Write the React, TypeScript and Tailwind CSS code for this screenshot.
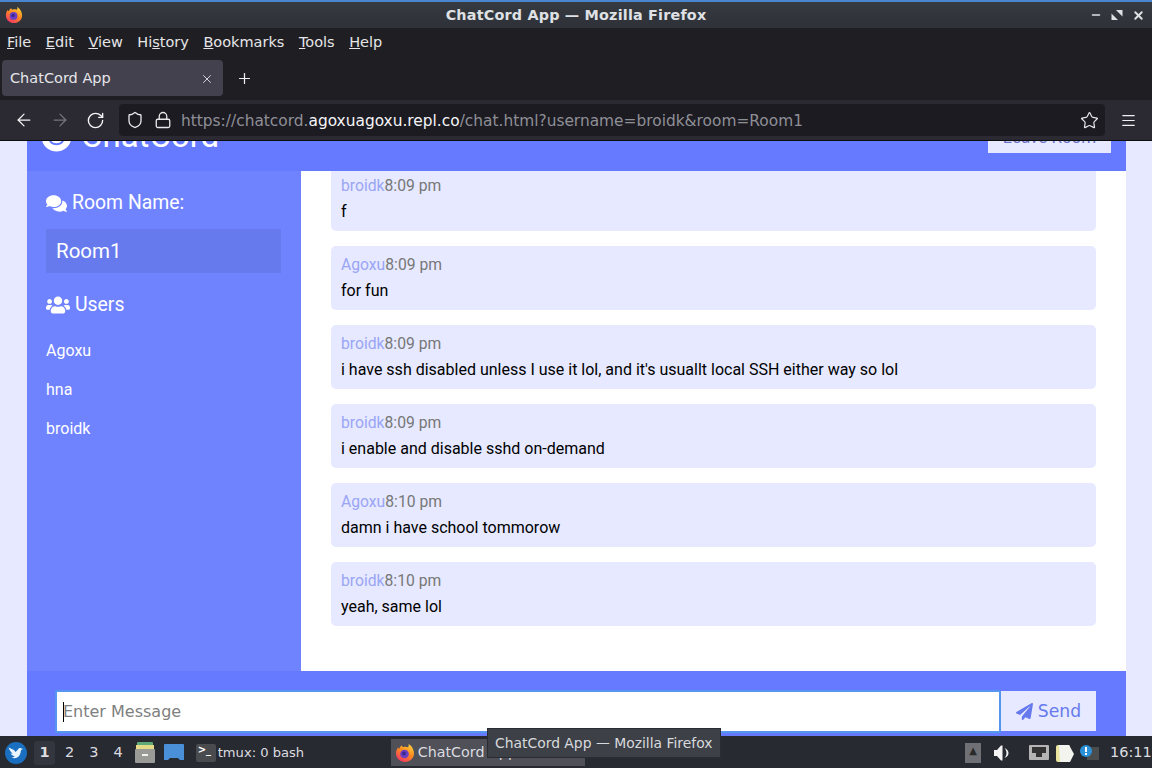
import { ArrowLeft, ArrowRight, RotateCw, Shield, Lock, Star, Menu, X, Plus, Minus } from 'lucide-react';
import { FaComments, FaUsers, FaPaperPlane, FaSmile } from 'react-icons/fa';

const menus = [
  ['F', 'ile'],
  ['E', 'dit'],
  ['V', 'iew'],
  ['Hi', 's', 'tory'],
  ['B', 'ookmarks'],
  ['T', 'ools'],
  ['H', 'elp'],
];

const messages = [
  { user: 'broidk', time: '8:09 pm', text: 'f' },
  { user: 'Agoxu', time: '8:09 pm', text: 'for fun' },
  { user: 'broidk', time: '8:09 pm', text: "i have ssh disabled unless I use it lol, and it's usuallt local SSH either way so lol" },
  { user: 'broidk', time: '8:09 pm', text: 'i enable and disable sshd on-demand' },
  { user: 'Agoxu', time: '8:10 pm', text: 'damn i have school tommorow' },
  { user: 'broidk', time: '8:10 pm', text: 'yeah, same lol' },
];

function FirefoxLogo({ size }: { size: number }) {
  return (
    <svg width={size} height={size} viewBox="0 0 20 20">
      <defs>
        <linearGradient id="ff" x1="0.8" y1="0" x2="0.2" y2="1">
          <stop offset="0" stopColor="#ffd43b" />
          <stop offset="0.45" stopColor="#ff8a1f" />
          <stop offset="1" stopColor="#f0306a" />
        </linearGradient>
      </defs>
      <path d="M13.5 1c.6 1.600 0 2.600-.6 3.200C11.500 3.600 9.500 3.500 8 4.200 7.500 3.800 7 3.200 6.800 2.500 5 3.500 4.500 4.800 4.400 5.800 3.800 5.500 3.300 5 3 4.500 1.800 6 1 8 1 10.500 1 15.200 5 19 10 19s9-3.800 9-8.500C19 6.500 16.500 2.500 13.500 1z" fill="url(#ff)" />
      <circle cx="9.500" cy="11" r="4.300" fill="#6a3fc4" />
      <circle cx="9" cy="10.500" r="2" fill="#3a2a90" />
    </svg>
  );
}

function BrowserChrome() {
  return (
    <>
      <div className="h-[28px] shrink-0 border-t-2 border-[#4a86d0] bg-gradient-to-b from-[#363b41] to-[#2e3137] flex items-center px-[5px] text-[#dfe1e4]">
        <div className="w-[64px]">
          <FirefoxLogo size={18} />
        </div>
        <div className="flex-1 text-center pt-[1px] font-bold text-[14.350px] tracking-[0.2px]">ChatCord App — Mozilla Firefox</div>
        <div className="w-[64px] flex items-center justify-end gap-[9px] pr-[2px]">
          <Minus size={12} strokeWidth={3} />
          <svg width="12" height="12" viewBox="0 0 12 12" fill="#dfe1e4">
            <path d="M5 1h6.500v6.500zM7 11H.5V4.500z" />
          </svg>
          <X size={13} strokeWidth={3.500} />
        </div>
      </div>
      <div className="h-[32px] shrink-0 bg-[#1f1f23] flex items-center pb-[2px] pl-[7px] gap-[14.500px] text-[14.500px] text-[#e6e6e8]">
        {menus.map((m) => (
          <span key={m.join('')}>
            {m.length === 3 ? (
              <>
                {m[0]}
                <span className="underline">{m[1]}</span>
                {m[2]}
              </>
            ) : (
              <>
                <span className="underline">{m[0]}</span>
                {m[1]}
              </>
            )}
          </span>
        ))}
      </div>
      <div className="h-[40px] shrink-0 bg-[#1f1f23] flex items-start pl-[2px]">
        <div className="w-[221px] h-[36px] rounded-[4px] bg-[#42414d] flex items-center pl-[8px] pr-[9px] pt-[1px] text-[14.500px] text-[#e6e6ea]">
          <span className="flex-1">ChatCord App</span>
          <X size={14} strokeWidth={1.500} />
        </div>
        <div className="h-[36px] ml-[13px] flex items-center text-[#f0f0f2]">
          <Plus size={17} strokeWidth={1.750} />
        </div>
      </div>
      <div className="h-[41px] shrink-0 bg-[#2b2a33] border-b border-[#0c0c0d] flex items-center relative">
        <div className="w-[119px] flex items-center pl-[14px] gap-[16px] text-[#f5f5f7]">
          <ArrowLeft size={20} strokeWidth={1.500} />
          <ArrowRight size={20} strokeWidth={1.500} className="text-[#76757e]" />
          <RotateCw size={19} strokeWidth={1.750} />
        </div>
        <div className="w-[986px] h-[32px] bg-[#1c1b22] rounded-[4px] flex items-center pl-[7px] pr-[6px] text-[#e8e8ea]">
          <Shield size={18} strokeWidth={1.750} />
          <Lock size={18} strokeWidth={1.750} className="ml-[10px]" />
          <span className="ml-[9px] pt-[3px] flex-1 text-[15.400px] text-[#8f8f96] whitespace-nowrap">
            https://chatcord.<span className="text-[#f5f5f7]">agoxuagoxu.repl.co</span>/chat.html?username=broidk&amp;room=Room1
          </span>
          <Star size={19} strokeWidth={1.500} />
        </div>
        <div className="flex-1 flex justify-center text-[#f0f0f2]">
          <Menu size={17} strokeWidth={1.750} />
        </div>
      </div>
    </>
  );
}

function ChatPage() {
  return (
    <div className="flex-1 min-h-0 bg-[#e6e9ff] pl-[27px] pr-[26px] overflow-hidden font-['Roboto',sans-serif]">
      <div className="h-[30px] bg-[#667aff] flex justify-between items-end pl-[14px] pr-[15px] overflow-hidden">
        <div className="flex items-center gap-[9px] mb-[15px] text-white text-[33px] leading-[40px] shrink-0 h-[40px]">
          <FaSmile size={31} />
          <span>ChatCord</span>
        </div>
        <div className="mb-[18px] w-[123px] h-[40px] bg-[#e6e9ff] text-[#6a72c8] text-[17px] leading-[20px] flex items-end justify-center pb-[6px] shrink-0">
          Leave Room
        </div>
      </div>
      <div className="h-[500px] flex">
        <div className="w-[274px] bg-[#7083ff] text-white px-[19px] pt-[21px]">
          <h3 className="flex items-center gap-[5px] text-[19.400px] leading-[22px] h-[22px]">
            <FaComments size={21} />
            Room Name:
          </h3>
          <div className="mt-[15px] h-[44px] w-[235px] bg-[#667aed] flex items-center pl-[10px] text-[20.500px]">Room1</div>
          <h3 className="mt-[21px] flex items-center gap-[5px] text-[19.400px] leading-[22px] h-[22px]">
            <FaUsers size={24} />
            Users
          </h3>
          <ul className="mt-[23px] flex flex-col gap-[15px] text-[16px] leading-[24px]">
            <li>Agoxu</li>
            <li>hna</li>
            <li>broidk</li>
          </ul>
        </div>
        <div className="flex-1 bg-white px-[30px] overflow-hidden">
          <div className="-mt-[4px] flex flex-col gap-[15px]">
            {messages.map((m, i) => (
              <div key={i} className="h-[64px] shrink-0 rounded-[5px] bg-[#e6e9ff] px-[10px] pt-[8px]">
                <p className="text-[15.700px] leading-[21px] text-[#777777]">
                  <span className="text-[#9aa5f5]">{m.user}</span>
                  {m.time}
                </p>
                <p className="mt-[3px] text-[16px] leading-[26px] text-[#000000]">{m.text}</p>
              </div>
            ))}
          </div>
        </div>
      </div>
      <div className="h-[65px] bg-[#667aff] pl-[28px] pr-[30px] pt-[19px] flex items-start">
        <div className="flex-1 h-[43px] bg-white border-2 border-[#5596ee] rounded-[2px] flex items-center pl-[6px]">
          <span className="w-px h-[20px] bg-black shrink-0" />
          <input readOnly placeholder="Enter Message" className="flex-1 bg-transparent outline-none pt-[1px] -ml-[1px] text-[16px] placeholder:text-[#808080] font-['DejaVu_Sans',sans-serif]" />
        </div>
        <div className="w-[95px] h-[40px] bg-[#e6e9ff] text-[#667aed] flex items-center justify-center gap-[5px] pt-[1px] text-[17.200px] mt-[1px] font-['DejaVu_Sans',sans-serif]">
          <FaPaperPlane size={17} />
          Send
        </div>
      </div>
    </div>
  );
}

function Taskbar() {
  return (
    <div className="h-[32px] shrink-0 bg-[#282a31] flex items-center text-[#dcdde0] text-[14.500px] pl-[5px] pt-[1px]">
      <svg width="22" height="22" viewBox="0 0 22 22">
        <circle cx="11" cy="11" r="11" fill="#1a6fc0" />
        <path d="M3.500 5.500 9 8l1.500 2 2.500-2.500c.5-1.300 1.700-1.800 2.800-1.300l2.200.8-2 .9c-.3 3-1 6-3.800 7.600-1.500.9-3.500 1-5.700.3 1.300-.2 2.400-.8 3.200-1.500C7.500 13.500 6 12.500 5.500 11.500l2.300.3C6 10.500 4.300 8 3.500 5.500z" fill="#eaf5fd" />
      </svg>
      <div className="ml-[7px] w-[21px] h-[24px] rounded-[3px] bg-[#33363e] flex items-center justify-center font-bold">1</div>
      <span className="ml-[10px]">2</span>
      <span className="ml-[15px]">3</span>
      <span className="ml-[15px]">4</span>
      <svg width="20" height="21" viewBox="0 0 20 21" className="ml-[12px]">
        <rect x="2" y="0" width="16" height="4" rx="1" fill="#5fa878" />
        <rect x="1" y="3" width="18" height="4" fill="#e5da88" />
        <rect x="0" y="7" width="20" height="14" rx="1" fill="#9a9a96" />
        <rect x="7" y="12" width="6" height="2" fill="#f2f2f2" />
      </svg>
      <svg width="20" height="17" viewBox="0 0 20 17" className="ml-[9px]">
        <path d="M0 1a1 1 0 011-1h18a1 1 0 011 1v15h-4l-2-2H6l-2 2H0z" fill="#4a90d9" />
      </svg>
      <div className="ml-[12px] w-[20px] h-[18px] rounded-[2px] bg-[#4a4b4f] flex items-start pl-[2px] pt-[1px] text-[10px] leading-[10px] font-bold text-white">
        &gt;_
      </div>
      <span className="ml-[2px] w-[173px] text-[13.100px]">tmux: 0 bash</span>
      <div className="w-[194px] h-[27px] bg-[#4f5058] flex items-center pl-[4px] gap-[3px] whitespace-nowrap text-[14.300px]">
        <FirefoxLogo size={20} />
        ChatCord App
      </div>
      <div className="flex-1" />
      <div className="w-[16px] h-[20px] bg-[#6f7075] flex items-start justify-center text-[10px] text-[#2a2a2a] mr-[13px]">▲</div>
      <svg width="16" height="16" viewBox="0 0 16 16" className="mr-[19px]">
        <path d="M0 5h3l4-4.500h1.500v15H7L3 11H0z" fill="#f4f4f4" />
        <path d="M10.500 3c2.700 1 4 3 4 5s-1.300 4-4 5c1.400-1.500 2-3.200 2-5s-.6-3.500-2-5z" fill="#f4f4f4" />
      </svg>
      <svg width="20" height="16" viewBox="0 0 20 16" className="mr-[6px]">
        <rect width="20" height="15" rx="1" fill="#b4b4b4" />
        <rect x="3" y="2" width="14" height="6" fill="#333" />
        <rect x="7" y="8" width="6" height="4" fill="#333" />
      </svg>
      <svg width="20" height="20" viewBox="0 0 20 20" className="mr-[4px]">
        <rect x="1" y="2" width="14" height="17" rx="2" fill="#e8e4a0" />
        <path d="M4 2h10l5 9-4 8H5z" fill="#f4f4ef" />
      </svg>
      <svg width="20" height="18" viewBox="0 0 20 18" className="mr-[11px]">
        <rect x="8" y="3" width="12" height="13" fill="#4a4c4e" />
        <circle cx="7" cy="7" r="6" fill="#2a90d8" />
        <rect x="6" y="3" width="2" height="5" fill="#fff" />
        <rect x="6" y="9" width="2" height="2" fill="#fff" />
      </svg>
      <span className="mr-[4px] w-[38px]">16:11</span>
    </div>
  );
}

export default function App() {
  return (
    <div className="relative w-[1152px] h-[768px] overflow-hidden flex flex-col font-['DejaVu_Sans',sans-serif]">
      <BrowserChrome />
      <ChatPage />
      <Taskbar />
      <div className="absolute left-[487px] top-[728px] w-[234px] h-[30px] bg-[#3d4047] border border-[#2a2c32] flex items-center pl-[7px] text-[13.900px] text-[#d8dadd] whitespace-nowrap">
        ChatCord App — Mozilla Firefox
      </div>
    </div>
  );
}
